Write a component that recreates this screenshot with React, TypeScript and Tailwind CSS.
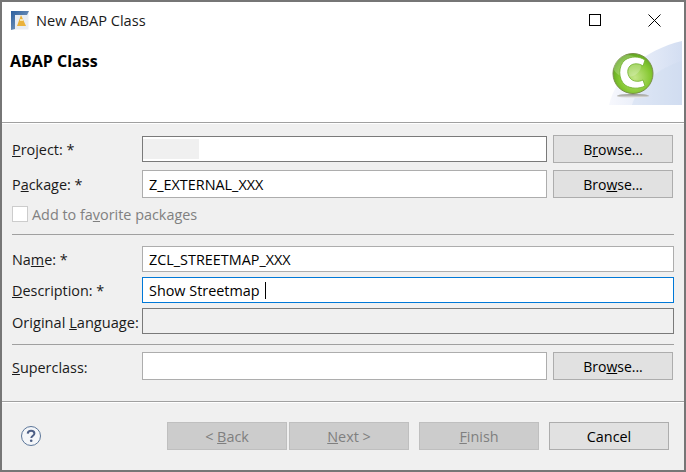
import React from 'react';

const Divider = ({ className }: { className: string }) => (
  <div className={`h-px bg-[#a0a0a0] ${className}`} />
);

const TextBox = ({ value, tall, focus, disabled, wide, dark, caret }: {
  value?: string; tall?: boolean; focus?: boolean; disabled?: boolean; wide?: boolean; dark?: boolean; caret?: boolean;
}) => (
  <div
    className={`flex items-center border px-[6px] pt-[2px] text-[14.4px] leading-none text-black
      ${tall ? 'h-[28px]' : 'h-[26px]'} ${wide ? 'w-[532px]' : 'w-[405px]'}
      ${disabled ? 'bg-[#f0f0f0]' : 'bg-white'}
      ${focus ? 'border-[#0078d7]' : dark ? 'border-[#7a7a7a]' : 'border-[#adadad]'}`}
  >
    {value}
    {caret && <span className="mb-[2px] ml-[5px] h-[17px] w-px bg-black" />}
  </div>
);

const Browse = ({ children }: { children: React.ReactNode }) => (
  <button className="ml-[6px] h-[28px] w-[120px] border border-[#adadad] bg-[#e1e1e1] pt-[2px] text-[14px] leading-none text-black">
    {children}
  </button>
);

const Label = ({ children, className = 'pt-[2px]' }: { children: React.ReactNode; className?: string }) => (
  <div className={`w-[130px] shrink-0 whitespace-nowrap text-[14.4px] leading-none text-[#1a1a1a] ${className}`}>{children}</div>
);

const FooterButton = ({ children, disabled, className = '' }: { children: React.ReactNode; disabled?: boolean; className?: string }) => (
  <button
    className={`h-[28px] w-[120px] border pt-[3px] text-[14.4px] leading-none ${
      disabled ? 'border-[#bfbfbf] bg-[#cccccc] text-[#7f7f7f]' : 'border-[#adadad] bg-[#e1e1e1] text-black'
    } ${className}`}
  >
    {children}
  </button>
);

const TitleIcon = () => (
  <svg width="18" height="19" viewBox="0 0 18 19">
    <defs>
      <linearGradient id="ti" x1="0" y1="0" x2="1" y2="1">
        <stop offset="0" stopColor="#2c5f9e" />
        <stop offset="1" stopColor="#8fa9c6" />
      </linearGradient>
    </defs>
    <rect x="0.5" y="0.5" width="17" height="18" fill="#e9edf2" />
    <path d="M0 0H18L16 4H4V18L0 19Z" fill="url(#ti)" />
    <path d="M10 4L15 15H6Z" fill="#eab23b" />
    <rect x="9" y="8" width="3" height="2" fill="#fbe6a8" />
  </svg>
);

const WizardArt = () => (
  <svg className="absolute right-0 top-[38px]" width="76" height="65" viewBox="0 0 76 65">
    <defs>
      <linearGradient id="bn" x1="0" y1="0" x2="1" y2="0">
        <stop offset="0" stopColor="#f7f8fd" />
        <stop offset="1" stopColor="#d3def2" />
      </linearGradient>
      <radialGradient id="ball" cx="0.55" cy="0.6" r="0.6">
        <stop offset="0" stopColor="#c4e688" />
        <stop offset="0.65" stopColor="#86c832" />
        <stop offset="1" stopColor="#5fa51f" />
      </radialGradient>
      <linearGradient id="sh" x1="0" y1="0" x2="0" y2="1">
        <stop offset="0" stopColor="#8a8a80" />
        <stop offset="1" stopColor="#f2f3f6" />
      </linearGradient>
    </defs>
    <path d="M1 65C8 35 36 10 74 1V65Z" fill="url(#bn)" />
    <path d="M24 65C30 45 50 28 74 21V65Z" fill="#cfdbf0" opacity="0.45" />
    <ellipse cx="25" cy="56" rx="16" ry="2" fill="url(#sh)" />
    <circle cx="25" cy="33.5" r="20" fill="url(#ball)" stroke="#7a8f4a" strokeWidth="1" />
    <ellipse cx="19" cy="26" rx="14" ry="11" fill="#ffffff" opacity="0.22" />
    <path
      d="M37 20C31 16 23 16 17 20C10 26 10 39 17 45C23 49 31 49 37 46L35 40C31 42 25 42 22 38C19 34 19 29 22 26C25 23 31 23 35 26Z"
      fill="#ffffff"
      stroke="#6fae2a"
      strokeWidth="0.8"
    />
  </svg>
);

const HelpIcon = () => (
  <svg width="20" height="20" viewBox="0 0 20 20">
    <circle cx="10" cy="10" r="9.5" fill="#f4f6f9" stroke="#5b7699" strokeWidth="1" />
    <path d="M6.7 7.6C6.9 5.7 8.3 4.8 10.1 4.8C12 4.8 13.4 5.9 13.4 7.5C13.4 9.6 10.4 9.8 10.3 12" fill="none" stroke="#4d5f86" strokeWidth="2" />
    <circle cx="10.2" cy="14.8" r="1.3" fill="#4d5f86" />
  </svg>
);

export default function App() {
  return (
    <div
      className="flex h-[472px] w-[686px] flex-col overflow-hidden border-2 border-[#767676] bg-[#f0f0f0]"
      style={{ fontFamily: '"Open Sans", "Noto Sans", sans-serif' }}
    >
      <div className="relative h-[120px] shrink-0 bg-white">
        <div className="flex h-[36px] items-center pl-[9px] pr-[23px]">
          <TitleIcon />
          <span className="ml-[7px] text-[14.6px] leading-none text-[#1a1a1a]">New ABAP Class</span>
          <svg className="ml-auto" width="13" height="13" viewBox="0 0 13 13">
            <rect x="0.5" y="0.5" width="11" height="11" fill="none" stroke="#000" />
          </svg>
          <svg className="ml-[46px]" width="13" height="13" viewBox="0 0 13 13">
            <path d="M0.5 0.5L12.5 12.5M12.5 0.5L0.5 12.5" stroke="#000" />
          </svg>
        </div>
        <h1 className="mt-[13px] pl-[8px] text-[16px] font-bold leading-[20px] text-black">ABAP Class</h1>
        <WizardArt />
      </div>
      <div className="h-px shrink-0 bg-[#a0a0a0]" />
      <div className="h-px shrink-0 bg-white" />

      <div className="flex flex-1 flex-col pl-[10px]">
        <div className="mt-[11px] flex h-[28px] items-center">
          <Label><u>P</u>roject: *</Label>
          <div className="relative">
            <TextBox dark />
            <div className="absolute left-px top-[3px] h-[20px] w-[56px] bg-[#f0f0f0]" />
          </div>
          <Browse>B<u>r</u>owse...</Browse>
        </div>
        <div className="mt-[7px] flex h-[28px] items-center">
          <Label>P<u>a</u>ckage: *</Label>
          <TextBox tall value="Z_EXTERNAL_XXX" />
          <Browse>Bro<u>w</u>se...</Browse>
        </div>
        <div className="mt-[8px] flex h-[16px] items-center">
          <div className="h-[16px] w-[16px] border border-[#cccccc] bg-white" />
          <span className="ml-[4px] pt-[2px] text-[14.4px] leading-none text-[#808080]">Add to fa<u>v</u>orite packages</span>
        </div>
        <Divider className="mr-[10px] mt-[12px]" />
        <div className="mt-[11px] flex h-[26px] items-center">
          <Label>Na<u>m</u>e: *</Label>
          <TextBox wide value="ZCL_STREETMAP_XXX" />
        </div>
        <div className="mt-[5px] flex h-[26px] items-center">
          <Label><u>D</u>escription: *</Label>
          <TextBox wide focus value="Show Streetmap" caret />
        </div>
        <div className="mt-[5px] flex h-[26px] items-center">
          <Label className="pt-[2px] !text-[14.6px]">Original <u>L</u>anguage:</Label>
          <TextBox wide disabled dark />
        </div>
        <Divider className="mr-[10px] mt-[10px]" />
        <div className="mt-[7px] flex h-[28px] items-center">
          <Label className="pt-[5px]"><u>S</u>uperclass:</Label>
          <TextBox tall />
          <Browse>Bro<u>w</u>se...</Browse>
        </div>
      </div>

      <div className="h-px shrink-0 bg-[#a0a0a0]" />
      <div className="h-px shrink-0 bg-white" />
      <div className="flex h-[67px] shrink-0 items-center pb-[2px] pl-[19px]">
        <HelpIcon />
        <FooterButton disabled className="ml-[126px]">&lt; <u>B</u>ack</FooterButton>
        <FooterButton disabled className="ml-[2px]"><u>N</u>ext &gt;</FooterButton>
        <FooterButton disabled className="ml-[10px]"><u>F</u>inish</FooterButton>
        <FooterButton className="ml-[10px]">Cancel</FooterButton>
      </div>
    </div>
  );
}
